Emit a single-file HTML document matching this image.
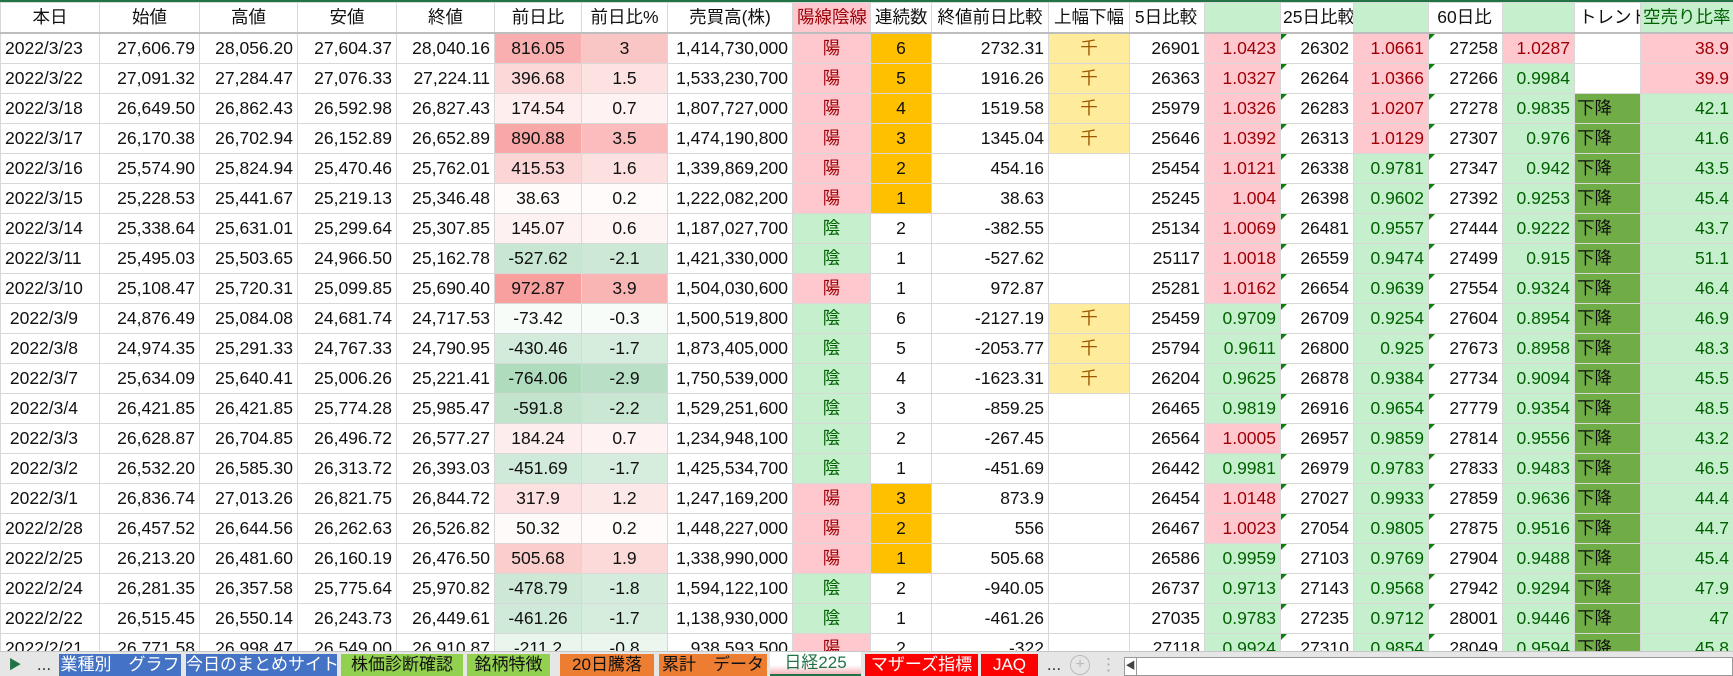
<!DOCTYPE html>
<html><head><meta charset="utf-8"><style>
body{margin:0;width:1733px;height:675px;overflow:hidden;background:#fff;font-family:"Liberation Sans","Noto Sans CJK JP",sans-serif;position:relative}
#top{position:absolute;left:0;top:0;width:1733px;height:2px;background:#217346}
table{position:absolute;left:0;top:2px;border-collapse:collapse;table-layout:fixed;width:1733px}
td{height:29px;border:1px solid #d8d8d8;padding:0 4px;font-size:17.5px;white-space:nowrap;overflow:hidden;text-align:right;color:#111;position:relative;line-height:29px}
tr.h td{height:29px;text-align:center;border-bottom:2px solid #bdbdbd}
td.l{text-align:left}td.c{text-align:center}
.p{background:#ffc7ce;color:#9c0006}.g{background:#c6efce;color:#006100}
.o{background:#ffc000}.y{background:#ffeb9c;color:#9c5700;text-align:center}
.t{background:#70ad47;color:#111;text-align:left;padding-left:2px}
.e::before{content:"";position:absolute;left:0;top:0;border-top:6px solid #107c10;border-right:6px solid transparent}
#tabs{position:absolute;left:0;top:651px;width:1733px;height:24px;background:#e6e6e6;border-top:1px solid #c6c6c6}
.tab{position:absolute;top:2px;height:22px;line-height:21px;font-size:17px;text-align:center;overflow:hidden;white-space:nowrap}
</style></head><body>
<div id="top"></div>
<table>
<colgroup><col style="width:99px"><col style="width:100px"><col style="width:98px"><col style="width:99px"><col style="width:98px"><col style="width:87px"><col style="width:86px"><col style="width:125px"><col style="width:78px"><col style="width:61px"><col style="width:117px"><col style="width:81px"><col style="width:75px"><col style="width:76px"><col style="width:73px"><col style="width:75px"><col style="width:74px"><col style="width:72px"><col style="width:66px"><col style="width:93px"></colgroup>
<tr class="h"><td>本日</td><td>始値</td><td>高値</td><td>安値</td><td>終値</td><td>前日比</td><td>前日比%</td><td>売買高(株)</td><td class="p">陽線陰線</td><td>連続数</td><td>終値前日比較</td><td>上幅下幅</td><td class="l" style="padding-left:2px">5日比較</td><td class="g"></td><td class="l" style="padding-left:2px">25日比較</td><td class="g"></td><td class="l" style="padding-left:2px">60日比</td><td class="g"></td><td class="l">トレンド</td><td class="g l" style="padding-left:2px">空売り比率</td></tr>
<tr><td class="l">2022/3/23</td><td>27,606.79</td><td>28,056.20</td><td>27,604.37</td><td>28,040.16</td><td class="c" style="background:rgb(249,175,175)">816.05</td><td class="c" style="background:rgb(250,197,197)">3</td><td>1,414,730,000</td><td class="p c">陽</td><td class="o c">6</td><td>2732.31</td><td class="y">千</td><td>26901</td><td class="p">1.0423</td><td class="e">26302</td><td class="p">1.0661</td><td class="e">27258</td><td class="p">1.0287</td><td></td><td class="p">38.9</td></tr>
<tr><td class="l">2022/3/22</td><td>27,091.32</td><td>27,284.47</td><td>27,076.33</td><td>27,224.11</td><td class="c" style="background:rgb(252,216,216)">396.68</td><td class="c" style="background:rgb(253,226,226)">1.5</td><td>1,533,230,700</td><td class="p c">陽</td><td class="o c">5</td><td>1916.26</td><td class="y">千</td><td>26363</td><td class="p">1.0327</td><td class="e">26264</td><td class="p">1.0366</td><td class="e">27266</td><td class="g">0.9984</td><td></td><td class="p">39.9</td></tr>
<tr><td class="l">2022/3/18</td><td>26,649.50</td><td>26,862.43</td><td>26,592.98</td><td>26,827.43</td><td class="c" style="background:rgb(254,238,238)">174.54</td><td class="c" style="background:rgb(254,242,242)">0.7</td><td>1,807,727,000</td><td class="p c">陽</td><td class="o c">4</td><td>1519.58</td><td class="y">千</td><td>25979</td><td class="p">1.0326</td><td class="e">26283</td><td class="p">1.0207</td><td class="e">27278</td><td class="g">0.9835</td><td class="t">下降</td><td class="g">42.1</td></tr>
<tr><td class="l">2022/3/17</td><td>26,170.38</td><td>26,702.94</td><td>26,152.89</td><td>26,652.89</td><td class="c" style="background:rgb(249,168,168)">890.88</td><td class="c" style="background:rgb(250,188,188)">3.5</td><td>1,474,190,800</td><td class="p c">陽</td><td class="o c">3</td><td>1345.04</td><td class="y">千</td><td>25646</td><td class="p">1.0392</td><td class="e">26313</td><td class="p">1.0129</td><td class="e">27307</td><td class="g">0.976</td><td class="t">下降</td><td class="g">41.6</td></tr>
<tr><td class="l">2022/3/16</td><td>25,574.90</td><td>25,824.94</td><td>25,470.46</td><td>25,762.01</td><td class="c" style="background:rgb(252,214,214)">415.53</td><td class="c" style="background:rgb(253,224,224)">1.6</td><td>1,339,869,200</td><td class="p c">陽</td><td class="o c">2</td><td>454.16</td><td></td><td>25454</td><td class="p">1.0121</td><td class="e">26338</td><td class="g">0.9781</td><td class="e">27347</td><td class="g">0.942</td><td class="t">下降</td><td class="g">43.5</td></tr>
<tr><td class="l">2022/3/15</td><td>25,228.53</td><td>25,441.67</td><td>25,219.13</td><td>25,346.48</td><td class="c" style="background:rgb(255,251,251)">38.63</td><td class="c" style="background:rgb(255,251,251)">0.2</td><td>1,222,082,200</td><td class="p c">陽</td><td class="o c">1</td><td>38.63</td><td></td><td>25245</td><td class="p">1.004</td><td class="e">26398</td><td class="g">0.9602</td><td class="e">27392</td><td class="g">0.9253</td><td class="t">下降</td><td class="g">45.4</td></tr>
<tr><td class="l">2022/3/14</td><td>25,338.64</td><td>25,631.01</td><td>25,299.64</td><td>25,307.85</td><td class="c" style="background:rgb(254,241,241)">145.07</td><td class="c" style="background:rgb(254,244,244)">0.6</td><td>1,187,027,700</td><td class="g c">陰</td><td class="c">2</td><td>-382.55</td><td></td><td>25134</td><td class="p">1.0069</td><td class="e">26481</td><td class="g">0.9557</td><td class="e">27444</td><td class="g">0.9222</td><td class="t">下降</td><td class="g">43.7</td></tr>
<tr><td class="l">2022/3/11</td><td>25,495.03</td><td>25,503.65</td><td>24,966.50</td><td>25,162.78</td><td class="c" style="background:rgb(200,231,210)">-527.62</td><td class="c" style="background:rgb(205,233,214)">-2.1</td><td>1,421,330,000</td><td class="g c">陰</td><td class="c">1</td><td>-527.62</td><td></td><td>25117</td><td class="p">1.0018</td><td class="e">26559</td><td class="g">0.9474</td><td class="e">27499</td><td class="g">0.915</td><td class="t">下降</td><td class="g">51.1</td></tr>
<tr><td class="l">2022/3/10</td><td>25,108.47</td><td>25,720.31</td><td>25,099.85</td><td>25,690.40</td><td class="c" style="background:rgb(248,160,160)">972.87</td><td class="c" style="background:rgb(249,180,180)">3.9</td><td>1,504,030,600</td><td class="p c">陽</td><td class="c">1</td><td>972.87</td><td></td><td>25281</td><td class="p">1.0162</td><td class="e">26654</td><td class="g">0.9639</td><td class="e">27554</td><td class="g">0.9324</td><td class="t">下降</td><td class="g">46.4</td></tr>
<tr><td class="l">&nbsp;2022/3/9</td><td>24,876.49</td><td>25,084.08</td><td>24,681.74</td><td>24,717.53</td><td class="c" style="background:rgb(247,252,249)">-73.42</td><td class="c" style="background:rgb(248,252,249)">-0.3</td><td>1,500,519,800</td><td class="g c">陰</td><td class="c">6</td><td>-2127.19</td><td class="y">千</td><td>25459</td><td class="g">0.9709</td><td class="e">26709</td><td class="g">0.9254</td><td class="e">27604</td><td class="g">0.8954</td><td class="t">下降</td><td class="g">46.9</td></tr>
<tr><td class="l">&nbsp;2022/3/8</td><td>24,974.35</td><td>25,291.33</td><td>24,767.33</td><td>24,790.95</td><td class="c" style="background:rgb(211,235,218)">-430.46</td><td class="c" style="background:rgb(214,237,221)">-1.7</td><td>1,873,405,000</td><td class="g c">陰</td><td class="c">5</td><td>-2053.77</td><td class="y">千</td><td>25794</td><td class="g">0.9611</td><td class="e">26800</td><td class="g">0.925</td><td class="e">27673</td><td class="g">0.8958</td><td class="t">下降</td><td class="g">48.3</td></tr>
<tr><td class="l">&nbsp;2022/3/7</td><td>25,634.09</td><td>25,640.41</td><td>25,006.26</td><td>25,221.41</td><td class="c" style="background:rgb(176,220,190)">-764.06</td><td class="c" style="background:rgb(185,224,198)">-2.9</td><td>1,750,539,000</td><td class="g c">陰</td><td class="c">4</td><td>-1623.31</td><td class="y">千</td><td>26204</td><td class="g">0.9625</td><td class="e">26878</td><td class="g">0.9384</td><td class="e">27734</td><td class="g">0.9094</td><td class="t">下降</td><td class="g">45.5</td></tr>
<tr><td class="l">&nbsp;2022/3/4</td><td>26,421.85</td><td>26,421.85</td><td>25,774.28</td><td>25,985.47</td><td class="c" style="background:rgb(194,228,205)">-591.8</td><td class="c" style="background:rgb(202,231,212)">-2.2</td><td>1,529,251,600</td><td class="g c">陰</td><td class="c">3</td><td>-859.25</td><td></td><td>26465</td><td class="g">0.9819</td><td class="e">26916</td><td class="g">0.9654</td><td class="e">27779</td><td class="g">0.9354</td><td class="t">下降</td><td class="g">48.5</td></tr>
<tr><td class="l">&nbsp;2022/3/3</td><td>26,628.87</td><td>26,704.85</td><td>26,496.72</td><td>26,577.27</td><td class="c" style="background:rgb(254,237,237)">184.24</td><td class="c" style="background:rgb(254,242,242)">0.7</td><td>1,234,948,100</td><td class="g c">陰</td><td class="c">2</td><td>-267.45</td><td></td><td>26564</td><td class="p">1.0005</td><td class="e">26957</td><td class="g">0.9859</td><td class="e">27814</td><td class="g">0.9556</td><td class="t">下降</td><td class="g">43.2</td></tr>
<tr><td class="l">&nbsp;2022/3/2</td><td>26,532.20</td><td>26,585.30</td><td>26,313.72</td><td>26,393.03</td><td class="c" style="background:rgb(208,234,217)">-451.69</td><td class="c" style="background:rgb(214,237,221)">-1.7</td><td>1,425,534,700</td><td class="g c">陰</td><td class="c">1</td><td>-451.69</td><td></td><td>26442</td><td class="g">0.9981</td><td class="e">26979</td><td class="g">0.9783</td><td class="e">27833</td><td class="g">0.9483</td><td class="t">下降</td><td class="g">46.5</td></tr>
<tr><td class="l">&nbsp;2022/3/1</td><td>26,836.74</td><td>27,013.26</td><td>26,821.75</td><td>26,844.72</td><td class="c" style="background:rgb(253,224,224)">317.9</td><td class="c" style="background:rgb(253,232,232)">1.2</td><td>1,247,169,200</td><td class="p c">陽</td><td class="o c">3</td><td>873.9</td><td></td><td>26454</td><td class="p">1.0148</td><td class="e">27027</td><td class="g">0.9933</td><td class="e">27859</td><td class="g">0.9636</td><td class="t">下降</td><td class="g">44.4</td></tr>
<tr><td class="l">2022/2/28</td><td>26,457.52</td><td>26,644.56</td><td>26,262.63</td><td>26,526.82</td><td class="c" style="background:rgb(255,250,250)">50.32</td><td class="c" style="background:rgb(255,251,251)">0.2</td><td>1,448,227,000</td><td class="p c">陽</td><td class="o c">2</td><td>556</td><td></td><td>26467</td><td class="p">1.0023</td><td class="e">27054</td><td class="g">0.9805</td><td class="e">27875</td><td class="g">0.9516</td><td class="t">下降</td><td class="g">44.7</td></tr>
<tr><td class="l">2022/2/25</td><td>26,213.20</td><td>26,481.60</td><td>26,160.19</td><td>26,476.50</td><td class="c" style="background:rgb(251,206,206)">505.68</td><td class="c" style="background:rgb(252,218,218)">1.9</td><td>1,338,990,000</td><td class="p c">陽</td><td class="o c">1</td><td>505.68</td><td></td><td>26586</td><td class="g">0.9959</td><td class="e">27103</td><td class="g">0.9769</td><td class="e">27904</td><td class="g">0.9488</td><td class="t">下降</td><td class="g">45.4</td></tr>
<tr><td class="l">2022/2/24</td><td>26,281.35</td><td>26,357.58</td><td>25,775.64</td><td>25,970.82</td><td class="c" style="background:rgb(205,233,214)">-478.79</td><td class="c" style="background:rgb(212,236,220)">-1.8</td><td>1,594,122,100</td><td class="g c">陰</td><td class="c">2</td><td>-940.05</td><td></td><td>26737</td><td class="g">0.9713</td><td class="e">27143</td><td class="g">0.9568</td><td class="e">27942</td><td class="g">0.9294</td><td class="t">下降</td><td class="g">47.9</td></tr>
<tr><td class="l">2022/2/22</td><td>26,515.45</td><td>26,550.14</td><td>26,243.73</td><td>26,449.61</td><td class="c" style="background:rgb(207,234,216)">-461.26</td><td class="c" style="background:rgb(214,237,221)">-1.7</td><td>1,138,930,000</td><td class="g c">陰</td><td class="c">1</td><td>-461.26</td><td></td><td>27035</td><td class="g">0.9783</td><td class="e">27235</td><td class="g">0.9712</td><td class="e">28001</td><td class="g">0.9446</td><td class="t">下降</td><td class="g">47</td></tr>
<tr><td class="l">2022/2/21</td><td>26,771.58</td><td>26,998.47</td><td>26,549.00</td><td>26,910.87</td><td class="c" style="background:rgb(233,245,237)">-211.2</td><td class="c" style="background:rgb(235,246,239)">-0.8</td><td>938,593,500</td><td class="p c">陽</td><td class="c">2</td><td>-322</td><td></td><td>27118</td><td class="g">0.9924</td><td class="e">27310</td><td class="g">0.9854</td><td class="e">28049</td><td class="g">0.9594</td><td class="t">下降</td><td class="g">45.8</td></tr>
</table>
<div id="tabs">
<div class="tab" style="left:8px;width:14px;color:#217346;font-size:13px">&#9654;</div>
<div class="tab" style="left:34px;width:20px;color:#333">...</div>
<div class="tab" style="left:59px;width:122px;background:#4472c4;color:#fff">業種別　グラフ</div>
<div class="tab" style="left:186px;width:151px;background:#4472c4;color:#fff">今日のまとめサイト</div>
<div class="tab" style="left:341px;width:122px;background:#92d050;color:#111">株価診断確認</div>
<div class="tab" style="left:467px;width:83px;background:#92d050;color:#111">銘柄特徴</div>
<div class="tab" style="left:560px;width:94px;background:#ed7d31;color:#111">20日騰落</div>
<div class="tab" style="left:659px;width:108px;background:#ed7d31;color:#111">累計　データ</div>
<div class="tab" style="left:770px;width:91px;top:0;height:24px;background:linear-gradient(#fff 60%,#f4b6bb);color:#217346;border-bottom:2px solid #217346;box-sizing:border-box">日経225</div>
<div class="tab" style="left:865px;width:113px;background:#ff0000;color:#fff">マザーズ指標</div>
<div class="tab" style="left:981px;width:57px;background:#ff0000;color:#fff">JAQ</div>
<div class="tab" style="left:1044px;width:20px;color:#333">...</div>
<div class="tab" style="left:1070px;width:18px;height:18px;top:3px;border:1px solid #bbb;border-radius:50%;color:#bbb;line-height:17px;font-size:16px">+</div>
<div class="tab" style="left:1100px;width:10px;color:#aaa">&#8942;</div>
<div style="position:absolute;left:1124px;top:5px;width:609px;height:19px;background:#fff;border:1px solid #999;box-sizing:border-box"><div style="position:absolute;left:0;top:0;width:11px;height:17px;border-right:1px solid #999;font-size:10px;line-height:17px;text-align:center;color:#444">&#9664;</div></div>
</div>
</body></html>
